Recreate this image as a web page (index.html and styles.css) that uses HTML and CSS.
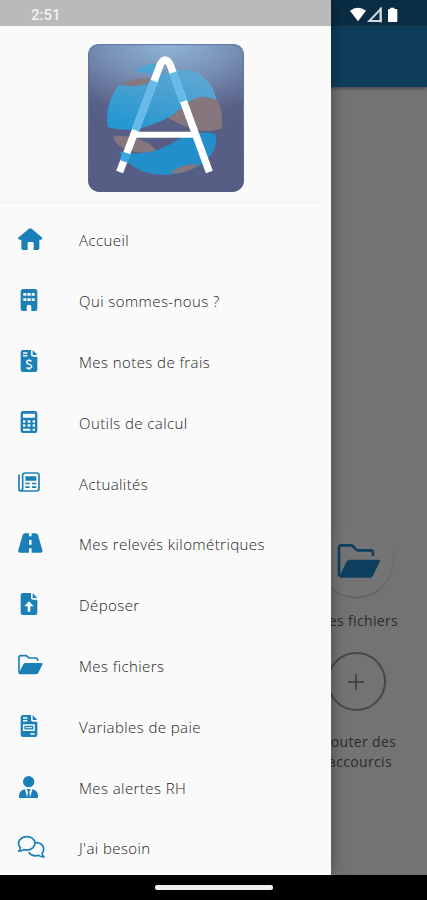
FILE: index.html
```html
<!DOCTYPE html>
<html lang="fr">
<head>
<meta charset="utf-8">
<title>Menu</title>
<link rel="stylesheet" href="styles.css">
</head>
<body>
<div class="phone">
  <main class="page">
    <header class="appbar"></header>
    <section class="shortcuts">
      <div class="shortcut">
        <span class="disc"><svg width="44" height="36" viewBox="0 0 132 108"><path d="M6 96V14q0-7 7-7h29q4 0 6 3l9 9q3 3 7 3h36q8 0 8 8v6" fill="none" stroke="#0d405e" stroke-width="8" stroke-linecap="round"/><path d="M7 101 29 55q3-5 8-5h88q6 0 3 6l-20 42q-3 6-8 6H11q-5 0-4-3z" fill="#0d405e"/></svg></span>
        <span class="caption">Mes fichiers</span>
      </div>
      <div class="shortcut">
        <span class="ring"><svg width="18" height="18" viewBox="0 0 18 18"><path d="M9 1v16M1 9h16" stroke="#3b3b3b" stroke-width="1.5"/></svg></span>
        <span class="caption add">Ajouter des<br>raccourcis</span>
      </div>
    </section>
  </main>

  <aside class="drawer">
    <div class="brand">
      <svg width="158" height="150" viewBox="0 0 474 450">
        <defs>
          <radialGradient id="glow" cx=".52" cy="-.02" r=".85"><stop offset="0" stop-color="#90b6d6"/><stop offset=".5" stop-color="#7890b5"/><stop offset="1" stop-color="#596087"/></radialGradient>
          <linearGradient id="edge" x1="0" y1="0" x2="0" y2="1"><stop offset="0" stop-color="#62789f"/><stop offset="1" stop-color="#505780"/></linearGradient>
          <linearGradient id="blue" x1="0" y1="1" x2=".6" y2="0"><stop offset="0" stop-color="#1c96d2"/><stop offset=".6" stop-color="#459fd0"/><stop offset="1" stop-color="#5ba7d3"/></linearGradient>
        </defs>
        <rect x="4" y="4" width="466" height="442" rx="32" fill="#575e85"/>
        <path d="M4 36Q4 4 36 4H438Q470 4 470 36V158Q445 245 340 260H140Q45 250 4 180z" fill="url(#glow)"/>
        <rect x="5" y="5" width="464" height="440" rx="31" fill="none" stroke="url(#edge)" stroke-width="3"/>
        <path d="M147 82q22-22 78-20l-17 28q-36 6-61-8z" fill="#4ca4d3"/>
        <path d="M104 126q31-26 94-18l-8 17q-42 7-86 1z" fill="#85797f"/>
        <path d="M233 219q38-17 64-43 47-30 94-2 16 20 14 82-34 13-78 4-48-13-94-41z" fill="#86777e"/>
        <path d="M96 126q58 10 98-10 40-37 83-35 42-5 72 21 31 24 40 70-54-29-105 22-28 28-75 45-78 35-147 13-10-70 34-126z" fill="url(#blue)"/>
        <path d="M78 280q60-5 99 18 22 10 32 29-44 7-83-5-37-8-48-42z" fill="#86777e"/>
        <path d="M96 326q80 17 150-20 76-50 139-33 12 54-47 94-47 29-116 29-88-8-126-70z" fill="#238fca"/>
        <path d="M248 390q34-28 90-26-41 31-90 26z" fill="#86777e"/>
        <path d="M98 387 220 64q14-27 29 0L367 387" fill="none" stroke="#fff" stroke-width="22" stroke-linejoin="round"/>
        <path d="M147 275H320" stroke="#fff" stroke-width="18"/>
        <path d="M201 114 145 262M258 89l31 86" stroke="#68bbe9" stroke-width="24"/>
        <path d="M119 330 110 355" stroke="#3da6df" stroke-width="24"/>
      </svg>
    </div>
    <nav class="menu">
      <a class="item"><svg class="icon" viewBox="0 0 84 72"><path d="M36 5q4-3 8 0L74 31q5 6-2 7h-5v26q0 5-5 5H50V48q0-3-3-3H35q-3 0-3 3v21H18q-5 0-5-5V38H8q-8-1-3-7z"/></svg><span>Accueil</span></a>
      <a class="item"><svg class="icon" viewBox="0 0 84 72"><path fill-rule="evenodd" d="M18 3h36q7 0 7 7v52q0 7-7 7H43V57q0-7-7-7t-7 7v12H18q-7 0-7-7V10q0-7 7-7zM19 15v8h9v-8zm12 0v8h10v-8zm13 0v8h9v-8zM19 31v8h9v-8zm12 0v8h10v-8zm13 0v8h9v-8z"/></svg><span>Qui sommes-nous ?</span></a>
      <a class="item"><svg class="icon" viewBox="0 0 84 72"><path d="M18 3h24v14q0 6 6 6h13v39q0 7-7 7H18q-7 0-7-7V10q0-7 7-7zM47 3l14 15H47z"/><path class="cut" d="M18 12h13M18 20h13M44 36q-14-4-15 3 0 5 8 7 8 3 7 8-3 6-16 2M37 31v5m0 21v6"/></svg><span>Mes notes de frais</span></a>
      <a class="item"><svg class="icon" viewBox="0 0 84 72"><path fill-rule="evenodd" d="M18 3h36q7 0 7 7v52q0 7-7 7H18q-7 0-7-7V10q0-7 7-7zM18 11v12h36V11zM18 31v7h7v-7zm14 0v7h8v-7zm15 0v7h7v-7zM18 43v7h7v-7zm14 0v7h8v-7zm15 0v7h7v-7zM18 56v6h22v-6zm29 0v6h7v-6z"/></svg><span>Outils de calcul</span></a>
      <a class="item"><svg class="icon news" viewBox="0 0 84 72"><path class="line" d="M6 15v41q0 7 7 7h45q8 0 8-8V16q0-7-7-7H24q-7 0-7 7v39q0 8-7 8"/><path d="M25 19h33v13H25zM25 38h13v5H25zm20 0h13v5H45zM25 49h13v5H25zm20 0h13v5H45z"/></svg><span>Actualités</span></a>
      <a class="item"><svg class="icon" viewBox="0 0 84 72"><path d="M24 7h12v9h8V7h12q5 0 7 5l13 45q2 8-6 8H44V52h-8v13H10q-8 0-6-8l13-45q2-5 7-5zM36 27v14h8V27z" fill-rule="evenodd"/></svg><span>Mes relevés kilométriques</span></a>
      <a class="item"><svg class="icon" viewBox="0 0 84 72"><path d="M18 3h24v14q0 6 6 6h13v39q0 7-7 7H18q-7 0-7-7V10q0-7 7-7zM47 3l14 15H47z"/><path d="M36 28 50 43H40v16h-8V43H22z" fill="#fafafa"/></svg><span>Déposer</span></a>
      <a class="item"><svg class="icon" viewBox="0 0 84 72"><path class="line" d="M6 58V13q0-5 5-5h17l8 7h20q6 0 6 7"/><path d="m5 61 14-27q2-4 6-4h48q6 0 3 5L64 59q-2 5-7 5H9q-5 0-4-3z"/></svg><span>Mes fichiers</span></a>
      <a class="item"><svg class="icon" viewBox="0 0 84 72"><path d="M18 3h24v14q0 6 6 6h13v39q0 7-7 7H18q-7 0-7-7V10q0-7 7-7zM47 3l14 15H47z"/><path class="cut" d="M18 12h13M18 20h13M20 33h31v16H20zM40 60h13"/><path class="cut thin" d="M26 41h19"/></svg><span>Variables de paie</span></a>
      <a class="item"><svg class="icon" viewBox="0 0 84 72"><circle cx="35" cy="20" r="17"/><path d="M24 43 31 69H6V63q0-17 18-20zm22 0q17 3 17 20v6H39zM29 42h12l-4 9 3 18H30l3-18z"/></svg><span>Mes alertes RH</span></a>
      <a class="item"><svg class="icon" viewBox="0 0 84 72"><path class="line" d="M10 38Q0 27 8 15 17 4 31 5q15 1 21 12 5 13-5 22-11 9-27 5-7 5-15 4 5-4 5-10zM58 23q17 1 21 14 3 11-4 18 1 7 6 11-9 0-16-5-19 5-29-8"/></svg><span>J'ai besoin</span></a>
    </nav>
  </aside>

  <div class="statusbar">
    <span class="clock">2:51</span>
    <svg width="50" height="16" viewBox="0 0 150 48"><path d="M0 11Q23-6 48 11L24 43z" fill="#fff"/><path d="M92 6v36H58z" fill="none" stroke="#d4d8de" stroke-width="6"/><path d="M92 2v44" stroke="#d4d8de" stroke-width="6"/><path d="M121 2h12v4h6q3 0 3 3v33q0 3-3 3h-22q-3 0-3-3V9q0-3 3-3h4z" fill="#fff"/></svg>
  </div>
  <footer class="navbar"><span class="handle"></span></footer>
</div>
</body>
</html>
```
FILE: styles.css
```css
* { box-sizing: border-box; }
body {
  margin: 0;
  font-family: "Open Sans", "Noto Sans", sans-serif;
  font-size: 14px;
}
.phone {
  position: relative;
  width: 427px;
  height: 900px;
  overflow: hidden;
  background: #737373;
  display: flex;
  flex-direction: column;
}
.page { flex: 1; }
.appbar {
  height: 87px;
  background: #0e3d5a;
  box-shadow: 0 1px 4px rgba(0, 0, 0, .45);
}
.shortcuts {
  width: 120px;
  margin: 436px 0 0 297px;
  display: flex;
  flex-direction: column;
}
.shortcut {
  display: flex;
  flex-direction: column;
  align-items: center;
}
.disc, .ring {
  display: flex;
  align-items: center;
  justify-content: center;
  border-radius: 50%;
}
.disc {
  width: 74px;
  height: 74px;
  margin-right: 3px;
  background: #747474;
  box-shadow: 0 1px 1px rgba(0, 0, 0, .22);
}
.disc svg { margin: 2px 0 0 6px; }
.ring {
  width: 59px;
  height: 59px;
  margin: 21px 2px 0 0;
  border: 2px solid #474747;
}
.caption {
  margin-top: 14px;
  line-height: 20px;
  letter-spacing: .35px;
  color: #2b2b2b;
  text-align: center;
}
.caption.add { margin-top: 21px; }
.drawer {
  position: absolute;
  top: 0;
  left: 0;
  width: 331px;
  height: 875px;
  padding-top: 26px;
  background: #fafafa;
  box-shadow: 0 0 14px rgba(0, 0, 0, .4);
}
.brand {
  height: 177px;
  margin-right: 11px;
  padding: 17px 0 0 87px;
  border-bottom: 1px solid #f1f1f1;
}
.brand svg { display: block; }
.menu { padding-top: 7px; }
.item {
  height: 60.8px;
  padding-left: 17px;
  display: flex;
  align-items: center;
  color: #1c1c1c;
  font-size: 15px;
  font-weight: 300;
  letter-spacing: .42px;
}
.icon {
  width: 28px;
  height: 24px;
  margin: 0 34px 2px 0;
  fill: #1b80b7;
}
.icon.news { margin-bottom: 3px; }
.line {
  fill: none;
  stroke: #1b80b7;
  stroke-width: 5;
  stroke-linecap: round;
  stroke-linejoin: round;
}
.cut {
  fill: none;
  stroke: #fafafa;
  stroke-width: 4.5;
}
.cut.thin { stroke-width: 3; }
.statusbar {
  position: absolute;
  top: 0;
  left: 0;
  width: 427px;
  height: 26px;
  padding: 3px 27px 0 31px;
  display: flex;
  align-items: center;
  justify-content: space-between;
  background: rgba(0, 0, 0, .255);
}
.clock {
  color: #f2f2f2;
  font: 500 15px Roboto, sans-serif;
}
.navbar {
  position: relative;
  height: 25px;
  display: flex;
  align-items: center;
  justify-content: center;
  background: #000;
}
.handle {
  width: 118px;
  height: 5px;
  border-radius: 2px;
  background: #efefef;
}
```
